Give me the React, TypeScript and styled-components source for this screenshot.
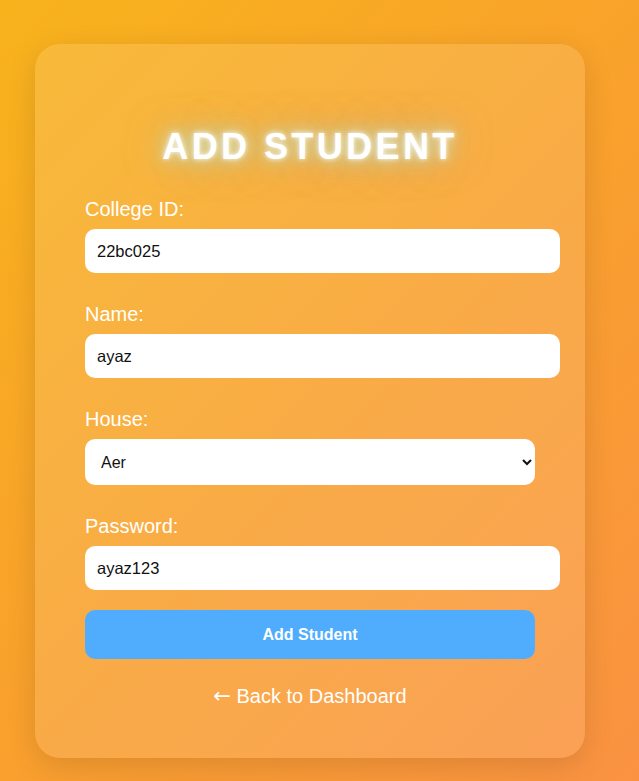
import React, { useState } from 'react';
import styled, { createGlobalStyle } from 'styled-components';

const GlobalStyle = createGlobalStyle`
  html, body {
    margin: 0;
    padding: 0;
  }
  body {
    font-family: 'Liberation Sans', Arial, sans-serif;
    background: linear-gradient(135deg, #f8b31c 0%, #f9a12c 50%, #fa9242 100%);
    min-height: 100vh;
  }
`;

const Page = styled.div`
  min-height: 781px;
  box-sizing: border-box;
  padding: 44px 0 24px 35px;
`;

const Card = styled.div`
  width: 550px;
  box-sizing: border-box;
  padding: 50px;
  border-radius: 25px;
  background: rgba(255, 255, 255, 0.12);
  box-shadow: 0 8px 30px rgba(0, 0, 0, 0.12);
`;

const Title = styled.h2`
  margin: 32px 0 30px;
  text-align: center;
  font-size: 36px;
  font-weight: 700;
  letter-spacing: 3.4px;
  color: #fff;
  text-shadow: 0 0 5px rgba(255, 255, 255, 0.9), 0 0 14px rgba(215, 230, 190, 0.95),
    0 0 26px rgba(180, 215, 200, 0.9), 0 0 40px rgba(150, 200, 220, 0.5);
`;

const Form = styled.form`
  display: flex;
  flex-direction: column;
`;

const Field = styled.div`
  display: flex;
  flex-direction: column;
  margin-bottom: ${({ $last }: { $last?: boolean }) => ($last ? '20px' : '30px')};
`;

const Label = styled.label`
  font-size: 20px;
  color: #fff;
  margin-bottom: 8px;
`;

const TextInput = styled.input`
  width: 475px;
  height: 44px;
  box-sizing: border-box;
  padding: 0 12px;
  border: none;
  border-radius: 10px;
  background: #fff;
  font-family: 'Liberation Sans', Arial, sans-serif;
  font-size: 16.5px;
  color: #111;
  outline: none;
  caret-color: #000;
`;

const Select = styled.select`
  width: 450px;
  height: 46px;
  box-sizing: border-box;
  padding: 0 12px;
  border: none;
  border-radius: 10px;
  background: #fff;
  font-family: 'Liberation Sans', Arial, sans-serif;
  font-size: 16px;
  color: #111;
  outline: none;
`;

const SubmitButton = styled.button`
  width: 450px;
  height: 49px;
  border: none;
  border-radius: 10px;
  background: #50adfe;
  color: #fff;
  font-family: 'Liberation Sans', Arial, sans-serif;
  font-size: 16px;
  font-weight: 700;
  cursor: pointer;
`;

const BackLink = styled.a`
  display: block;
  margin-top: 25px;
  text-align: center;
  font-size: 20px;
  color: #fff;
  text-decoration: none;
`;

const Arrow = styled.span`
  font-family: 'DejaVu Sans', sans-serif;
  font-size: 21px;
`;

export default function App() {
  const [collegeId, setCollegeId] = useState('22bc025');
  const [name, setName] = useState('ayaz');
  const [house, setHouse] = useState('Aer');
  const [password, setPassword] = useState('ayaz123');

  return (
    <>
      <GlobalStyle />
      <Page>
        <Card>
          <Title>ADD STUDENT</Title>
          <Form onSubmit={(e) => e.preventDefault()}>
            <Field>
              <Label>College ID:</Label>
              <TextInput value={collegeId} onChange={(e) => setCollegeId(e.target.value)} />
            </Field>
            <Field>
              <Label>Name:</Label>
              <TextInput value={name} onChange={(e) => setName(e.target.value)} />
            </Field>
            <Field>
              <Label>House:</Label>
              <Select value={house} onChange={(e) => setHouse(e.target.value)}>
                <option>Aer</option>
                <option>Ignis</option>
                <option>Aqua</option>
                <option>Terra</option>
              </Select>
            </Field>
            <Field $last>
              <Label>Password:</Label>
              <TextInput value={password} onChange={(e) => setPassword(e.target.value)} />
            </Field>
            <SubmitButton type="submit">Add Student</SubmitButton>
          </Form>
          <BackLink href="#">
            <Arrow>←</Arrow> Back to Dashboard
          </BackLink>
        </Card>
      </Page>
    </>
  );
}
